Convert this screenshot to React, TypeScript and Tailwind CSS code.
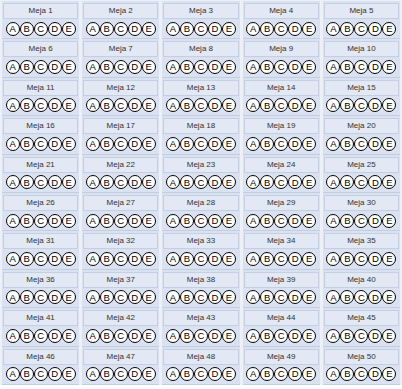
const options = ["A", "B", "C", "D", "E"];

const tables = Array.from({ length: 50 }, (_, i) => i + 1);

function Option({ label }: { label: string }) {
  return (
    <span className="flex h-[14px] w-[14px] items-center justify-center rounded-full border border-black bg-white text-[9.5px] leading-none text-black">
      {label}
    </span>
  );
}

function TableCell({ no }: { no: number }) {
  return (
    <div className="flex h-[38.4px] flex-col border-b border-[#c3cde0] bg-[#dae1f0] px-[1px] pt-[2px]">
      <div className="flex h-[16px] items-center justify-center border border-[#c5cfe2] bg-[#e2e8f4] text-[8px] text-[#333]">
        Meja {no}
      </div>
      <div className="flex flex-1 items-center justify-center">
        {options.map((o) => (
          <Option key={o} label={o} />
        ))}
      </div>
    </div>
  );
}

export default function App() {
  return (
    <div className="h-[389px] w-[402px] bg-white font-['Liberation_Sans',Arial,sans-serif]">
      <div className="grid grid-cols-5 gap-x-[3px] bg-[#edf0f6] px-[2px] pt-[1px]">
        {tables.map((n) => (
          <TableCell key={n} no={n} />
        ))}
      </div>
    </div>
  );
}
